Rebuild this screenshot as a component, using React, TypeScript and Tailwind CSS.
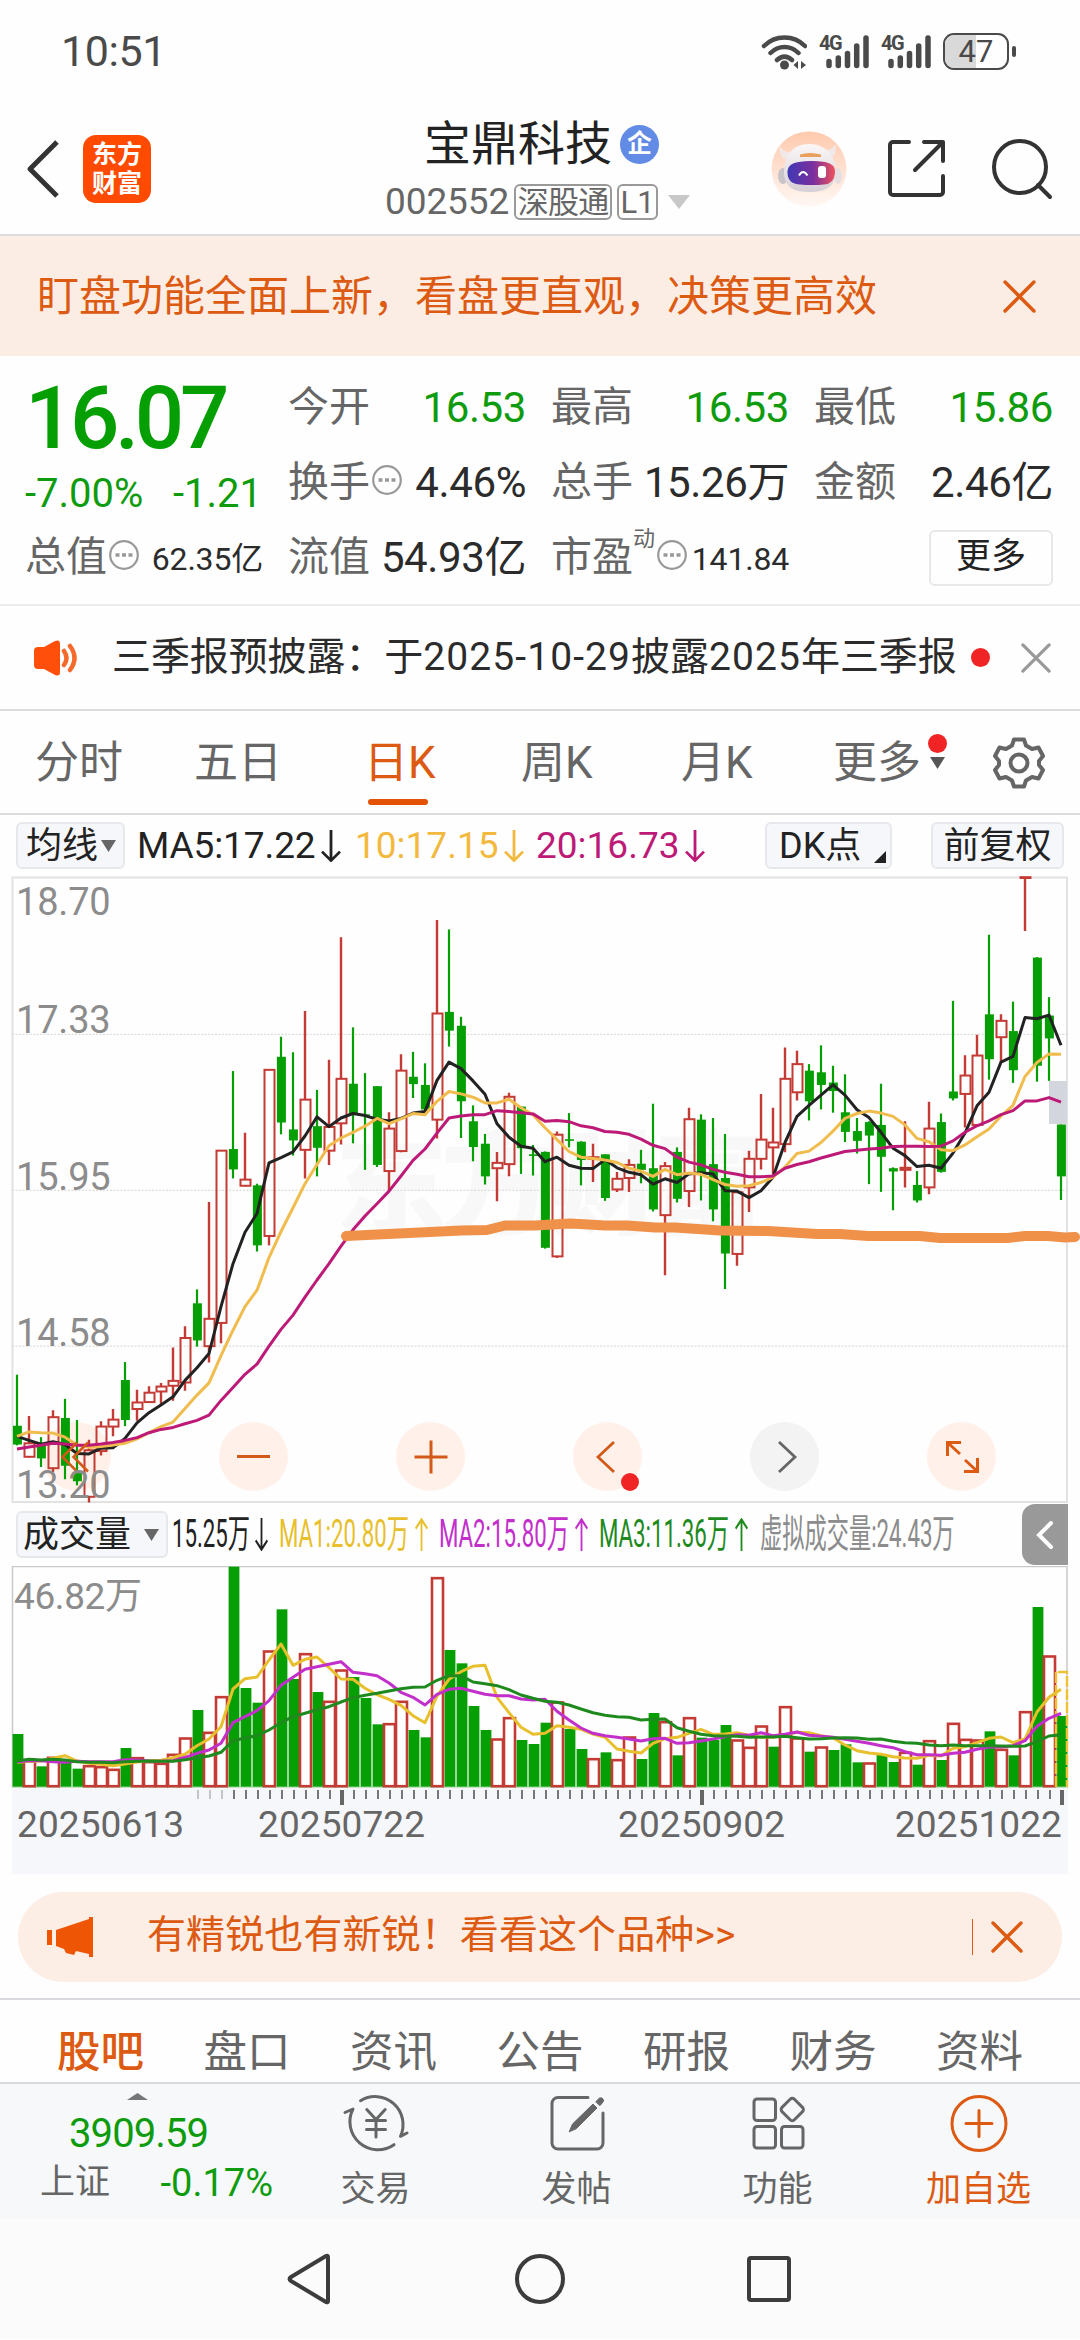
import type { ReactNode } from "react";
import clsx from "clsx";

const UP = "#c43a34";
const DOWN = "#069f03";

// [high, body top, body bottom, low, rising]
type Candle = [number, number, number, number, 0 | 1];

const candles: Candle[] = [
  [1237, 1362, 1408, 1410, 0], [1338, 1405, 1438, 1440, 1], [1390, 1408, 1442, 1463, 0], [1324, 1341, 1466, 1475, 1],
  [1296, 1343, 1460, 1493, 0], [1348, 1478, 1498, 1508, 0], [1396, 1422, 1536, 1550, 1], [1351, 1364, 1424, 1435, 1],
  [1321, 1347, 1364, 1388, 1], [1206, 1250, 1348, 1363, 0], [1274, 1305, 1321, 1350, 1], [1265, 1281, 1304, 1306, 1],
  [1257, 1266, 1278, 1310, 1], [1170, 1252, 1264, 1301, 1], [1118, 1147, 1256, 1276, 1], [1028, 1062, 1153, 1168, 0],
  [814, 1100, 1167, 1207, 1], [688, 688, 1110, 1160, 1], [493, 684, 734, 756, 0], [644, 759, 774, 775, 1],
  [769, 773, 920, 935, 0], [490, 490, 897, 920, 1], [409, 458, 619, 648, 0], [447, 636, 663, 700, 0],
  [346, 563, 686, 756, 1], [539, 628, 681, 751, 0], [465, 630, 688, 723, 1], [165, 512, 621, 673, 1],
  [386, 524, 600, 670, 0], [498, 599, 602, 735, 0], [530, 530, 723, 728, 0], [594, 634, 738, 785, 1],
  [452, 492, 689, 692, 1], [446, 507, 525, 559, 0], [474, 527, 587, 603, 0], [123, 352, 612, 658, 1],
  [146, 348, 394, 433, 0], [360, 382, 567, 657, 0], [577, 616, 679, 714, 0], [647, 671, 751, 771, 0],
  [691, 718, 731, 812, 1], [546, 556, 721, 751, 1], [580, 580, 682, 745, 0], [674, 697, 701, 749, 0],
  [690, 691, 926, 928, 0], [641, 649, 947, 951, 1], [596, 660, 664, 680, 0], [665, 666, 711, 773, 0],
  [671, 704, 708, 765, 1], [697, 697, 804, 811, 0], [740, 757, 783, 789, 1], [709, 723, 755, 789, 1],
  [686, 720, 735, 768, 0], [573, 731, 832, 837, 0], [716, 726, 846, 993, 1], [680, 691, 806, 815, 0],
  [583, 611, 787, 826, 1], [599, 612, 745, 810, 0], [608, 721, 832, 861, 0], [647, 755, 940, 1027, 0],
  [790, 790, 941, 970, 1], [688, 708, 778, 838, 1], [549, 661, 708, 734, 1], [583, 668, 680, 745, 1],
  [435, 512, 672, 692, 1], [443, 476, 545, 565, 1], [476, 492, 567, 614, 0], [430, 496, 527, 587, 0],
  [480, 521, 542, 595, 0], [501, 594, 642, 667, 0], [608, 640, 664, 695, 0], [616, 618, 651, 770, 0],
  [524, 625, 703, 789, 0], [729, 731, 739, 834, 0], [616, 730, 735, 778, 1], [738, 772, 810, 815, 0],
  [568, 634, 778, 795, 1], [597, 618, 740, 742, 0], [321, 543, 560, 565, 0], [454, 504, 549, 631, 1],
  [404, 455, 625, 630, 1], [159, 354, 464, 514, 0], [354, 370, 410, 471, 1], [323, 395, 491, 522, 0],
  [20, 18, 20, 150, 1], [214, 215, 480, 519, 0], [312, 357, 413, 517, 0], [624, 624, 751, 809, 0],
];

const ma5 = [
  1388, 1398, 1407, 1401, 1408, 1430, 1431, 1417, 1416, 1393, 1355, 1330, 1311, 1291, 1251, 1220, 1185, 1070, 965, 888,
  842, 718, 705, 691, 652, 605, 629, 608, 597, 602, 611, 615, 609, 596, 592, 516, 471, 487, 517, 550, 622, 655, 677,
  682, 715, 704, 724, 731, 732, 710, 730, 741, 747, 770, 757, 766, 745, 742, 745, 786, 787, 803, 786, 753, 668, 604,
  577, 552, 527, 552, 588, 607, 643, 682, 700, 727, 724, 731, 694, 645, 578, 545, 471, 457, 362, 365, 356, 430,
];
const ma10 = [
  1388, 1377, 1379, 1380, 1390, 1409, 1415, 1413, 1409, 1405, 1394, 1379, 1364, 1353, 1320, 1287, 1257, 1190, 1128,
  1070, 1030, 950, 886, 828, 769, 722, 676, 657, 643, 628, 609, 622, 610, 597, 600, 567, 543, 549, 557, 571, 571, 562,
  583, 600, 632, 661, 690, 704, 707, 711, 717, 731, 738, 751, 734, 747, 743, 746, 759, 771, 775, 774, 766, 753, 728,
  695, 689, 668, 640, 609, 597, 591, 596, 604, 625, 658, 666, 686, 688, 674, 654, 635, 603, 577, 506, 472, 451, 452,
];
const ma20 = [
  1419, 1414, 1410, 1405, 1407, 1410, 1410, 1407, 1403, 1398, 1391, 1379, 1371, 1366, 1357, 1349, 1336, 1300, 1268,
  1236, 1211, 1167, 1126, 1091, 1047, 1005, 965, 922, 882, 848, 818, 787, 750, 712, 684, 645, 608, 603, 600, 600, 590,
  592, 595, 598, 616, 614, 617, 627, 632, 641, 643, 648, 660, 675, 683, 704, 716, 723, 734, 741, 746, 752, 752, 750,
  731, 722, 715, 706, 698, 690, 687, 684, 682, 678, 677, 677, 678, 677, 664, 643, 627, 615, 600, 590, 566, 566, 558,
  569,
];

// negative values are hollow (rising) bars
const volumes = [
  702, -783, 799, -772, 785, 806, -797, -800, -808, 744, -773, -785, -790, -763, -714, 630, -697, -590, 200, 564, 608,
  -453, 328, 537, -461, 576, -604, -510, 531, 594, 673, -671, -604, 690, 712, -233, 450, 490, 618, 690, -717, -653, 720,
  732, 668, -606, 687, 747, -776, 757, -779, -711, 777, 639, -665, 766, -653, 713, 720, 675, -720, -742, -678, 740,
  -620, -714, 755, -741, 750, 733, 787, -789, 765, 786, -757, 794, -722, 780, -670, -718, -720, 694, -748, 766, -635,
  321, -468, 648,
];
const vol5 = [
  787, 784, 783, 775, 767, 783, 790, 793, 797, 792, 786, 782, 781, 773, 763, 737, 717, 680, 567, 536, 531, 480, 432,
  496, 478, 471, 503, 537, 538, 565, 584, 598, 616, 647, 668, 588, 538, 515, 499, 496, 592, 638, 682, 703, 700, 677,
  682, 688, 702, 712, 747, 754, 759, 730, 716, 712, 700, 688, 703, 702, 698, 706, 712, 712, 705, 697, 698, 707, 713,
  735, 752, 759, 763, 770, 774, 775, 766, 768, 745, 740, 728, 715, 711, 728, 717, 636, 592, 568,
];
const vol10 = [
  785, 782, 782, 785, 787, 784, 785, 785, 785, 779, 780, 783, 784, 782, 772, 760, 750, 730, 668, 650, 632, 602, 556,
  532, 508, 500, 493, 485, 517, 521, 527, 549, 577, 592, 615, 583, 568, 565, 574, 583, 587, 587, 597, 600, 598, 634,
  660, 684, 700, 707, 712, 717, 723, 716, 715, 730, 728, 723, 717, 710, 704, 706, 698, 707, 703, 696, 706, 709, 712,
  718, 724, 730, 737, 743, 755, 764, 764, 766, 760, 757, 748, 741, 741, 737, 722, 679, 655, 640,
];
const vol20 = [
  783, 778, 780, 778, 780, 785, 787, 787, 788, 785, 784, 783, 784, 784, 779, 773, 768, 757, 722, 714, 707, 690, 668,
  650, 640, 629, 620, 606, 593, 586, 580, 573, 566, 562, 561, 541, 527, 527, 546, 551, 557, 569, 585, 595, 604, 607,
  615, 627, 638, 646, 650, 652, 660, 658, 657, 683, 694, 703, 707, 708, 709, 712, 711, 711, 709, 713, 717, 716, 714,
  713, 714, 718, 717, 724, 728, 730, 735, 737, 735, 737, 737, 737, 738, 739, 738, 725, 708, 704,
];

const xAt = (i: number) => 17 + i * 12;
const priceY = (v: number) => (v - 20) / 2.45 + 2;
const volY = (v: number) => v / 3 - 66;
const toPoints = (data: number[], y: (v: number) => number) =>
  data.map((v, i) => `${xAt(i)},${y(v).toFixed(1)}`).join(" ");

interface LineProps {
  data: number[];
  y: (v: number) => number;
  color: string;
}

const MaLine = ({ data, y, color }: LineProps) => (
  <polyline points={toPoints(data, y)} fill="none" stroke={color} strokeWidth="3" strokeLinejoin="round" />
);

const Close = ({ className }: { className: string }) => (
  <svg viewBox="0 0 32 32" className={className} fill="none" stroke="currentColor" strokeWidth="3.4" strokeLinecap="round">
    <path d="M2 2 30 30M30 2 2 30" />
  </svg>
);

const Triangle = ({ className }: { className: string }) => (
  <svg viewBox="0 0 16 12" preserveAspectRatio="none" className={className} fill="currentColor">
    <path d="M0 0h16L8 12z" />
  </svg>
);

const Arrow = ({ up, className }: { up?: boolean; className?: string }) => (
  <svg
    viewBox="0 0 20 34"
    preserveAspectRatio="none"
    className={clsx("shrink-0", up && "rotate-180", className)}
    fill="none"
    stroke="currentColor"
    strokeWidth="2.8"
  >
    <path d="M10 0v32M1 23l9 9.500 9-9.500" />
  </svg>
);

const More = () => (
  <svg viewBox="0 0 30 30" className="ml-[2px] size-[30px] shrink-0 -translate-y-[3px]">
    <circle cx="15" cy="15" r="13.800" fill="none" stroke="#999" strokeWidth="2.2" />
    <path d="M6.500 15h4M13 15h4M19.500 15h4" stroke="#999" strokeWidth="3.600" />
  </svg>
);

const Signal = () => (
  <div className="relative h-[35px] w-[50px]">
    <span className="absolute left-0 -top-[3px] text-[20px] leading-6 font-bold tracking-[-1.5px]">4G</span>
    <svg viewBox="0 0 50 35" className="size-full" stroke="currentColor" strokeWidth="5.500" strokeLinecap="round">
      <path d="M10 27.500v4M19.300 24v7.500M28.500 19.500v12M37.700 12v19.500M47 4v27.500" />
    </svg>
  </div>
);

const StatusBar = () => (
  <div className="flex h-[100px] items-center justify-between pl-[61px] pr-[64px] pt-[3px] text-[#4a4a4a]">
    <span className="text-[43px] tracking-[-0.4px]">10:51</span>
    <div className="flex items-center">
      <svg viewBox="0 0 46 36" className="mr-3 h-9 w-[46px]" fill="none" stroke="currentColor" strokeWidth="4.500" strokeLinecap="round">
        <path d="M3 12C14 .500 33 .500 44 12M9.500 19c8-8 20-8 28 0M16 26c5-4.500 10-4.500 15 0" />
        <circle cx="23.500" cy="31" r="4.500" fill="currentColor" stroke="none" />
        <path d="M37 27v8l-4.500-4zM40 35v-8l5 4z" fill="currentColor" stroke="none" />
      </svg>
      <Signal />
      <div className="w-3" />
      <Signal />
      <div className="relative ml-3 flex h-[37px] w-[66px] items-center justify-center overflow-hidden rounded-[11px] border-[2.500px] border-[#4a4a4a]">
        <div className="absolute inset-y-0 left-0 w-[31px] bg-[#d9d9d9]" />
        <span className="relative text-[31px] leading-none">47</span>
      </div>
      <div className="ml-[3px] h-[11px] w-[4px] rounded-sm bg-[#4a4a4a]" />
    </div>
  </div>
);

const Robot = () => (
  <svg viewBox="0 0 76 76" className="size-[76px]">
    <defs>
      <linearGradient id="halo" x2="0" y2="1">
        <stop offset="0" stopColor="#ffc9ad" />
        <stop offset="1" stopColor="#fff8f4" />
      </linearGradient>
      <linearGradient id="visor">
        <stop offset="0" stopColor="#4038b4" />
        <stop offset=".55" stopColor="#7c2f9e" />
        <stop offset="1" stopColor="#f0525c" />
      </linearGradient>
      <linearGradient id="shell" x2="0" y2="1">
        <stop offset="0" stopColor="#fbf7f7" />
        <stop offset="1" stopColor="#d6d0d6" />
      </linearGradient>
    </defs>
    <circle cx="38" cy="38" r="37.500" fill="url(#halo)" />
    <path d="M9 15c-1 7 1 11 6 14l8-7c-7 0-11-2-14-7zM64 13c2 8 0 12-5 15l-8-8c7 0 11-2 13-7z" fill="#f1e9e8" />
    <ellipse cx="12" cy="45" rx="5" ry="8" fill="#c9c3ca" />
    <ellipse cx="67" cy="45" rx="4" ry="8" fill="#e5dfe2" />
    <path d="M38 13c16 0 26 11 27 27 0 15-10 21-26 21S14 57 13 42c0-18 9-29 25-29z" fill="url(#shell)" />
    <path d="M29 23.500q10-3 21 0V26H29z" fill="#e8a05c" />
    <path d="M28 31q12-2 26 0 11 2 10 11-1 11-11 11.500-12 1-24 0Q17 53 16.500 42 16 32.500 28 31z" fill="url(#visor)" />
    <path d="M28 44.500q4-7 8.500 0" fill="none" stroke="#fff" strokeWidth="2" />
    <rect x="47" y="35" width="8" height="12" rx="3" fill="#fff" />
  </svg>
);

const Header = () => (
  <header className="relative flex h-[136px] items-center justify-between border-b-2 border-[#dcdcde] pl-[26px] pr-[27px] pt-[3px]">
    <div className="flex items-center gap-[23px]">
      <svg viewBox="0 0 34 58" className="h-[58px] w-[34px]" fill="none" stroke="#333" strokeWidth="5" strokeLinejoin="round">
        <path d="M31 2 4 29l27 27" />
      </svg>
      <div className="flex size-[68px] flex-col items-center justify-center rounded-[13px] bg-[#ff4a00] text-[25px] leading-[29px] font-bold text-white">
        <span>东方</span>
        <span>财富</span>
      </div>
    </div>
    <div className="flex items-center">
      <Robot />
      <svg viewBox="0 0 60 60" className="ml-10 size-[60px]" fill="none" stroke="#333" strokeWidth="4" strokeLinecap="round" strokeLinejoin="round">
        <path d="M22 3H6a3 3 0 0 0-3 3v47a3 3 0 0 0 3 3h47a3 3 0 0 0 3-3V37M37 3h19v19M55 4 28 31" />
      </svg>
      <svg viewBox="0 0 62 62" className="ml-[44px] size-[62px]" fill="none" stroke="#333" strokeWidth="4" strokeLinecap="round">
        <circle cx="29" cy="29" r="26" />
        <path d="m47 47 12 12" />
      </svg>
    </div>
    {/* centred title block */}
    <div className="absolute left-[385px] top-[15px] w-[310px]">
      <div className="flex h-[58px] items-center pl-[39px] text-[47px] text-[#222]">
        宝鼎科技
        <span className="ml-2 flex size-[39px] items-center justify-center rounded-full bg-[#628be6] text-[25px] font-bold text-white">
          企
        </span>
      </div>
      <div className="flex h-[58px] items-center text-[#666]">
        <span className="text-[37px] tracking-[-0.1px]">002552</span>
        <span className="ml-[5px] flex h-[36px] w-[98px] items-center justify-center rounded-md border-2 border-[#999] text-[31px] leading-none tracking-[-0.8px]">
          深股通
        </span>
        <span className="ml-[5px] flex h-[36px] w-[41px] items-center justify-center rounded-md border-2 border-[#999] text-[31px] leading-none">
          L1
        </span>
        <Triangle className="ml-[10px] h-[14px] w-[22px] text-[#c8c8c8]" />
      </div>
    </div>
  </header>
);

interface CellProps {
  label: ReactNode;
  value: string;
  green?: boolean;
  small?: boolean;
}

const Cell = ({ label, value, green, small }: CellProps) => (
  <div className="flex h-[75px] items-center justify-between whitespace-nowrap text-[#666]">
    <span className="flex items-center text-[41px]">{label}</span>
    <span
      className={clsx(
        small ? "pt-[3px] text-[32px] tracking-[-0.2px]" : "text-[42px] tracking-[-0.4px]",
        green ? "text-[#0e9c0e]" : "text-[#2b2b2b]",
      )}
    >
      {value}
    </span>
  </div>
);

const Quote = () => (
  <section className="grid h-[250px] grid-cols-[238px_238px_238px_239px] gap-x-[25px] border-b-2 border-[#ececee] pl-[25px] pt-[14px]">
    <div>
      <div className="flex h-[84px] items-center pt-[12px] text-[87px] leading-none font-medium tracking-[-4.4px] text-[#069f03]">16.07</div>
      <div className="flex h-[66px] items-center justify-between pr-px pt-[13px] text-[40px] text-[#0e9c0e]">
        <span>-7.00%</span>
        <span>-1.21</span>
      </div>
      <Cell label={<>总值<More /></>} value="62.35亿" small />
    </div>
    <div>
      <Cell label="今开" value="16.53" green />
      <Cell label={<>换手<More /></>} value="4.46%" />
      <Cell label="流值" value="54.93亿" />
    </div>
    <div>
      <Cell label="最高" value="16.53" green />
      <Cell label="总手" value="15.26万" />
      <Cell
        label={
          <>
            市盈<span className="-mt-[38px] text-[22px]">动</span>
            <More />
          </>
        }
        value="141.84"
        small
      />
    </div>
    <div>
      <Cell label="最低" value="15.86" green />
      <Cell label="金额" value="2.46亿" />
      <div className="flex h-[75px] items-center justify-end">
        <button className="h-[56px] w-[124px] rounded-md border-2 border-[#e8e8ea] pb-[3px] text-[35px] leading-none text-[#222]">更多</button>
      </div>
    </div>
  </section>
);

const News = () => (
  <div className="flex h-[105px] items-center border-b-2 border-[#dcdcde] pl-[33px] pr-[29px]">
    <svg viewBox="0 0 46 38" className="h-[38px] w-[46px]" fill="#ff4f0a">
      <path d="M5 8h6L22 2q5-2 5 3v28q0 5-5 3L11 30H5q-4 0-4-4V12q0-4 4-4z" />
      <path d="M31 12q5 7 0 14M37 7q9 12 0 24" fill="none" stroke="#f5692a" strokeWidth="4.500" strokeLinecap="round" />
    </svg>
    <p className="ml-[33px] w-[846px] whitespace-nowrap text-[39px] tracking-[-0.1px] text-[#2b2b2b]">
      三季报预披露：于<span className="tracking-[1.1px]">2025-10-29</span>披露<span className="tracking-[1.1px]">2025</span>年三季报
    </p>
    <span className="ml-[13px] size-[19px] rounded-full bg-[#f02424]" />
    <Close className="ml-auto size-[30px] text-[#999]" />
  </div>
);

const PeriodTabs = () => (
  <nav className="flex h-[104px] items-center border-b-2 border-[#dcdcde] pl-[35px] pt-[2px] text-[44px] text-[#666]">
    <span className="w-[159px]">分时</span>
    <span className="w-[170px]">五日</span>
    <span className="relative w-[157px] text-[#dd5a12]">
      日K
      <i className="absolute left-[4px] top-[69px] h-[6px] w-[60px] rounded-full bg-[#e35205]" />
    </span>
    <span className="w-[160px]">周K</span>
    <span className="w-[152px]">月K</span>
    <span className="relative w-[160px]">
      更多
      <i className="absolute left-[95px] top-[4px] size-[19px] rounded-full bg-[#f02424]" />
      <Triangle className="absolute left-[97px] top-[27px] h-[12px] w-[15px] text-[#555]" />
    </span>
    <svg viewBox="0 0 52 52" className="size-[52px]" fill="none" stroke="#666" strokeWidth="4" strokeLinejoin="round">
      <path d="M21 2.500h10l2 6 6 3.500 6.500-1.500 4.500 8.500-4 5v4l4 5-4.500 8.500-6.500-1.500-6 3.500-2 6H21l-2-6-6-3.500L6.500 41.500 2 33l4-5v-4l-4-5 4.500-8.500L13 12l6-3.500z" />
      <circle cx="26" cy="26" r="8.500" />
    </svg>
  </nav>
);

const chip = "flex h-[47px] items-center rounded-md border-2 border-[#e6e8ec] bg-[#f6f7fa] text-[36px] leading-none text-[#222]";

const MaRow = () => (
  <div className="flex h-[61px] items-center pl-[16px] pr-[16px] text-[37px] whitespace-nowrap">
    <div className={clsx(chip, "w-[109px] pl-[8px]")}>
      均线
      <Triangle className="ml-[3px] h-[12px] w-[15px] text-[#666]" />
    </div>
    <div className="ml-[12px] flex w-[218px] items-center text-[#222]">
      <span className="w-[184px] tracking-[-0.1px]">MA5:17.22</span>
      <Arrow className="h-[32px] w-[20px]" />
    </div>
    <div className="flex w-[181px] items-center text-[#f2b93e]">
      <span className="w-[149px]">10:17.15</span>
      <Arrow className="h-[32px] w-[20px]" />
    </div>
    <div className="flex items-center text-[#bd1a78]">
      <span className="w-[149px]">20:16.73</span>
      <Arrow className="h-[32px] w-[20px]" />
    </div>
    <div className={clsx(chip, "relative ml-auto w-[127px] pl-[12px]")}>
      DK点
      <svg viewBox="0 0 12 12" className="absolute bottom-[4px] right-[4px] size-3" fill="#222">
        <path d="M12 0v12H0z" />
      </svg>
    </div>
    <div className={clsx(chip, "ml-[39px] w-[133px] justify-center")}>前复权</div>
  </div>
);

const round = "flex size-[69px] items-center justify-center rounded-full";

const KLine = () => (
  <div className="relative h-[627px]">
    <svg viewBox="0 0 1080 627" className="block h-[627px] w-full">
      <rect x="12.500" y="1.500" width="1054.500" height="624.500" fill="none" stroke="#e2e2e2" strokeWidth="2" />
      <text x="335" y="350" fontSize="112" fontWeight="900" fill="#f8f8f8" textLength="430">
        东方财富
      </text>
      {[403, 785, 1167].map((v) => (
        <line key={v} x1="12" x2="1067" y1={priceY(v)} y2={priceY(v)} stroke="#d4d4d4" strokeDasharray="2 1.500" />
      ))}
      <rect x="1049" y="205" width="18" height="43" fill="#d3d6dc" />
      <circle cx="76.500" cy="580.500" r="34.500" fill="#fff1ea" />
      {candles.map(([high, top, bottom, low, rising], i) => {
        const x = xAt(i);
        if (!rising)
          return (
            <g key={i} fill={DOWN}>
              <rect x={x - 1.1} y={priceY(high)} width="2.200" height={priceY(low) - priceY(high)} />
              <rect x={x - 4.1} y={priceY(top)} width="9" height={Math.max(1.5, priceY(bottom) - priceY(top))} />
            </g>
          );
        return (
          <g key={i} stroke={UP} strokeWidth="2" fill="none">
            <path d={`M${x} ${priceY(high)}V${priceY(top)}M${x} ${priceY(bottom)}V${priceY(low)}`} strokeWidth="2.400" />
            <rect x={x - 4.5} y={priceY(top)} width="10" height={priceY(bottom) - priceY(top)} />
          </g>
        );
      })}
      <MaLine data={ma5} y={priceY} color="#222" />
      <MaLine data={ma10} y={priceY} color="#f1bc4e" />
      <MaLine data={ma20} y={priceY} color="#bd1a78" />
    </svg>

    <div className="absolute left-[42px] top-[546px] flex gap-[108px] text-[#d25a18]">
      <div className={round}>
        <svg viewBox="0 0 34 34" className="size-[34px]" fill="none" stroke="currentColor" strokeWidth="2.500">
          <path d="M17 2.500 2.500 17 17 31.500M28 2.500 13.500 17 28 31.500" />
        </svg>
      </div>
      <div className={clsx(round, "bg-[#fff1ea]")}>
        <i className="h-[3px] w-[33px] bg-current" />
      </div>
      <div className={clsx(round, "bg-[#fff1ea]")}>
        <svg viewBox="0 0 34 34" className="size-[34px]" stroke="currentColor" strokeWidth="3">
          <path d="M17 .500v33M.500 17h33" />
        </svg>
      </div>
      <div className={clsx(round, "relative bg-[#fff1ea]")}>
        <svg viewBox="0 0 34 34" className="size-[34px]" fill="none" stroke="currentColor" strokeWidth="2.800">
          <path d="M23 2 7 17l16 15" />
        </svg>
        <i className="absolute left-[48px] top-[51px] size-[18px] rounded-full bg-[#f02424]" />
      </div>
      <div className={clsx(round, "bg-[#f3f3f3] text-[#666]")}>
        <svg viewBox="0 0 34 34" className="size-[34px]" fill="none" stroke="currentColor" strokeWidth="2.800">
          <path d="M11 2l16 15-16 15" />
        </svg>
      </div>
      <div className={clsx(round, "bg-[#fff1ea] text-[#dd5a12]")}>
        <svg viewBox="0 0 34 34" className="size-[34px]" fill="none" stroke="currentColor" strokeWidth="3">
          <path d="M16 2.500H2.500V16M2.500 2.500 15 14M19 31.500h13.500V18M32.500 31.500 20 20" />
        </svg>
      </div>
    </div>

    <div className="absolute inset-y-0 left-[16px] text-[38px] leading-none tracking-[-0.2px] text-[#8c8c8c]">
      <span className="absolute top-[7px]">18.70</span>
      <span className="absolute top-[125px]">17.33</span>
      <span className="absolute top-[282px]">15.95</span>
      <span className="absolute top-[438px]">14.58</span>
      <span className="absolute top-[590px]">13.20</span>
    </div>

    {/* hand-drawn support line, runs past the frame */}
    <svg viewBox="0 0 1080 627" className="pointer-events-none absolute inset-0 size-full" fill="none">
      <path
        d="M346 360 461 354.500 487 354 505 349.500 535 349.500 570 347.500 580 348 605 349.500 627 349.500 655 351.500 675 351.500 720 354.500 768 355 817 358 840 358 868 360 920 360 940 362 1008 362 1025 360 1048 360 1065 361.500 1075 361"
        stroke="#f0914a"
        strokeWidth="10"
        strokeLinecap="round"
        strokeLinejoin="round"
      />
    </svg>
  </div>
);

interface VolLabelProps {
  text: string;
  up?: boolean;
  arrow?: boolean;
  box: string;
  width: string;
}

const VolLabel = ({ text, up, arrow = true, box, width }: VolLabelProps) => (
  <div className={clsx("flex shrink-0 items-center", box)}>
    <span className={width}>
      <span className="inline-block origin-left scale-x-[0.57]">{text}</span>
    </span>
    {arrow && <Arrow up={up} className="h-[33px] w-[13px]" />}
  </div>
);

const VolumeRow = () => (
  <div className="relative flex h-[63px] items-center pl-[16px] text-[39px] whitespace-nowrap">
    <div className={clsx(chip, "w-[152px] shrink-0 pl-[5px]")}>
      成交量
      <Triangle className="ml-[13px] h-[12px] w-[15px] text-[#666]" />
    </div>
    <VolLabel text="15.25万" box="ml-[4px] w-[107px] text-[#222]" width="w-[83px]" />
    <VolLabel text="MA1:20.80万" up box="w-[160px] text-[#e8bf2c]" width="w-[136px]" />
    <VolLabel text="MA2:15.80万" up box="w-[160px] text-[#c22fca]" width="w-[136px]" />
    <VolLabel text="MA3:11.36万" up box="w-[161px] text-[#1e8a1e]" width="w-[136px]" />
    <VolLabel text="虚拟成交量:24.43万" arrow={false} box="w-[192px] text-[#8c8c8c]" width="w-[192px]" />
    <div className="absolute right-[12px] top-px flex h-[61px] w-[46px] items-center justify-center rounded-l-[13px] bg-[#999]">
      <svg viewBox="0 0 18 30" className="h-[30px] w-[18px]" fill="none" stroke="#fff" strokeWidth="4" strokeLinecap="round">
        <path d="M15 3 3 15l12 12" />
      </svg>
    </div>
  </div>
);

const VolumeChart = () => (
  <div className="relative">
    <svg viewBox="0 0 1080 222" className="block h-[222px] w-full">
      <rect x="12.500" y=".500" width="1054.500" height="221" fill="none" stroke="#c9c9c9" strokeWidth="1.500" />
      <path d="M12 221.500h1055" stroke="#bfe3bd" strokeWidth="1.500" />
      {volumes.map((v, i) => {
        const top = volY(Math.abs(v));
        return v < 0 ? (
          <rect key={i} x={xAt(i) - 5} y={top + 0.5} width="11" height={219.7 - top} fill="#fff" stroke={UP} strokeWidth="2.600" />
        ) : (
          <rect key={i} x={xAt(i) - 4.4} y={top} width="10.800" height={220.7 - top} fill={DOWN} />
        );
      })}
      <path d="M1056 221V106h11v115" fill="none" stroke="#eec23a" strokeWidth="2.500" strokeDasharray="11 2" />
      <MaLine data={vol5} y={volY} color="#e8bf2c" />
      <MaLine data={vol10} y={volY} color="#c22fca" />
      <MaLine data={vol20} y={volY} color="#1e8a1e" />
    </svg>
    <span className="absolute left-[14px] top-[12px] text-[37px] leading-none tracking-[-0.4px] text-[#8c8c8c]">46.82万</span>
    <div className="mx-[12px] h-[86px] bg-[#f6f7fa]">
      <svg viewBox="12 0 1056 18" className="block h-[18px] w-[1056px]">
        {volumes.map((_, i) =>
          i < 15 ? null : [27, 57, 87].includes(i) ? (
            <rect key={i} x={xAt(i) - 1} y="2" width="4" height="15" fill="#666" />
          ) : (
            <rect key={i} x={xAt(i)} y="2" width="2" height="9" fill={i < 18 ? "#c4c4c4" : "#777"} />
          ),
        )}
      </svg>
      <div className="flex pl-[5px] pr-[6px] text-[37px] leading-[38px] tracking-[0.1px] text-[#666]">
        <span className="w-[241px]">20250613</span>
        <span className="w-[360px]">20250722</span>
        <span>20250902</span>
        <span className="ml-auto">20251022</span>
      </div>
    </div>
  </div>
);

const Promo = () => (
  <div className="mx-[18px] mt-[18px] flex h-[90px] items-center rounded-full bg-[#fceee5] pl-[29px] pr-[39px] text-[#dd5a12]">
    <svg viewBox="0 0 46 40" className="h-[40px] w-[46px]" fill="#ee5504">
      <path d="M0 13h5v15H0zM9 13 42 2V0h4v40h-4v-3l-13-3-2 4-8-2-2-4-8-3z" />
    </svg>
    <span className="ml-[54px] pb-[3px] text-[39px] tracking-[0.1px]">有精锐也有新锐！看看这个品种&gt;&gt;</span>
    <i className="ml-auto h-[36px] w-px bg-[#dd5a12]" />
    <Close className="ml-[18px] size-[32px]" />
  </div>
);

const infoTabs = ["股吧", "盘口", "资讯", "公告", "研报", "财务", "资料"];

const InfoTabs = () => (
  <nav className="mt-[16px] flex h-[86px] items-center justify-between border-y-2 border-[#d9dadd] px-[57px] pt-[23px] text-[43.500px] text-[#666]">
    {infoTabs.map((tab, i) => (
      <span key={tab} className={clsx(i === 0 && "font-medium text-[#dd5a12]")}>
        {tab}
      </span>
    ))}
  </nav>
);

const Action = ({ label, children }: { label: string; children: ReactNode }) => (
  <div className="flex w-[201px] flex-col items-center pt-[8px]">
    <svg viewBox="0 0 64 64" className="size-[64px] overflow-visible" fill="none" stroke="currentColor" strokeWidth="3" strokeLinecap="round" strokeLinejoin="round">
      {children}
    </svg>
    <span className="mt-[9px] text-[35px] leading-[50px]">{label}</span>
  </div>
);

const BottomBar = () => (
  <div className="flex h-[135px] bg-[#f6f8fa] text-[#666]">
    <div className="relative w-[275px]">
      <Triangle className="absolute left-[127px] top-[9px] h-[7px] w-[21px] rotate-180 text-[#777]" />
      <div className="pl-[69px] pt-[25px] text-[40px] leading-[50px] tracking-[-0.9px] text-[#0e9c0e]">3909.59</div>
      <div className="flex items-center justify-between pl-[40px] pr-[2px] text-[35px] leading-[48px]">
        上证
        <span className="text-[38px] text-[#0e9c0e]">-0.17%</span>
      </div>
    </div>
    <Action label="交易">
      <path d="M16.500 8.700A28 28 0 0 1 56.500 44.300L63 41M50 52.700A28 28 0 0 1 9 17L1 20.500" />
      <path d="m22.800 17.500 9.200 10 9.200-10M22.500 28.500h19M22.500 37.500h19M32 28v17" />
    </Action>
    <Action label="发帖">
      <path d="M43 5.500H13a6 6 0 0 0-6 6V51a6 6 0 0 0 6 6h39a6 6 0 0 0 6-6V21" />
      <path d="m24.300 39.500 3.200-7.500L48 12l4 4-20.500 20.500zM51 9.500l3.500-3.500q3-1 4 2 .500 1.500-3.500 5.500z" fill="currentColor" strokeWidth="1" />
    </Action>
    <Action label="功能">
      <rect x="8" y="7" width="21.500" height="21.500" rx="3" />
      <rect x="8" y="34.500" width="21.500" height="21.500" rx="3" />
      <rect x="35.500" y="34.500" width="21.500" height="21.500" rx="3" />
      <rect x="37.500" y="8.700" width="17.500" height="17.500" rx="3" transform="rotate(45 46.200 17.500)" />
    </Action>
    <div className="text-[#dd5a12]">
      <Action label="加自选">
        <circle cx="32" cy="31.500" r="27" />
        <path d="M19 31.500h26M32 18.500v26" />
      </Action>
    </div>
  </div>
);

const SystemNav = () => (
  <div className="h-[120px] bg-[#fbfbfb]">
    <svg viewBox="0 0 1080 120" className="h-[120px] w-full" fill="none" stroke="#3c3c3c" strokeWidth="4" strokeLinejoin="round">
      <path d="M328 38v44q0 2-2 1L291 62q-3-2 0-4l35-21q2-1 2 1z" />
      <circle cx="540" cy="60" r="23" />
      <rect x="749" y="39" width="40" height="42" rx="2" />
    </svg>
  </div>
);

const App = () => (
  <div className="w-[1080px] h-[2340px] overflow-hidden bg-[#fefefe] font-[Roboto,'Noto_Sans_CJK_SC',sans-serif]">
    <StatusBar />
    <Header />
    <div className="flex h-[120px] items-center justify-between bg-[#fcede4] pl-[37px] pr-[44px] text-[42px] text-[#dd5a12]">
      盯盘功能全面上新，看盘更直观，决策更高效
      <Close className="size-[33px]" />
    </div>
    <Quote />
    <News />
    <PeriodTabs />
    <MaRow />
    <KLine />
    <VolumeRow />
    <VolumeChart />
    <Promo />
    <InfoTabs />
    <BottomBar />
    <SystemNav />
  </div>
);

export default App;
